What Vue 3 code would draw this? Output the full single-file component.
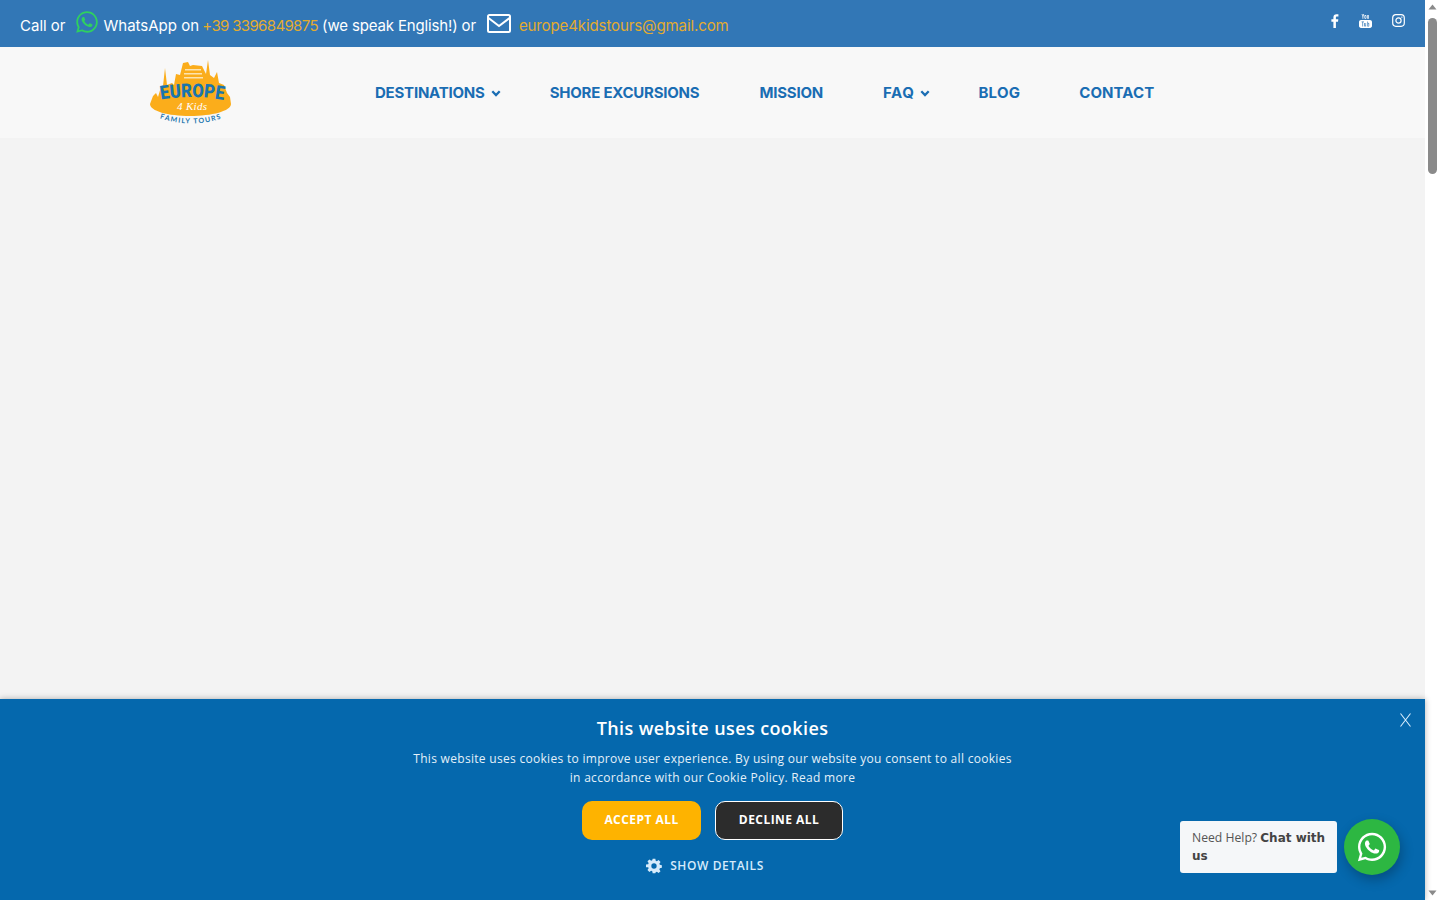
<script setup>
const navItems = [
  { label: "DESTINATIONS", caret: true },
  { label: "SHORE EXCURSIONS" },
  { label: "MISSION" },
  { label: "FAQ", caret: true },
  { label: "BLOG" },
  { label: "CONTACT" }
]
</script>

<template>
  <div class="page">
    <div class="main">
      <div class="topbar">
        <div class="contact">
          <span>Call or</span>
          <svg class="wa-icon" viewBox="0 0 24 24"><path fill="#2fd05f" d="M12.04 2C6.58 2 2.13 6.45 2.13 11.91c0 1.75.46 3.45 1.32 4.95L2.05 22l5.25-1.38c1.45.79 3.08 1.21 4.74 1.21 5.46 0 9.91-4.45 9.91-9.91C21.95 6.45 17.5 2 12.04 2zm0 18.15c-1.48 0-2.93-.4-4.2-1.15l-.3-.18-3.12.82.83-3.04-.2-.31a8.23 8.23 0 0 1-1.26-4.38c0-4.54 3.7-8.24 8.24-8.24 4.54 0 8.23 3.7 8.23 8.24 0 4.54-3.69 8.24-8.22 8.24zm4.52-6.16c-.25-.12-1.47-.72-1.69-.81-.23-.08-.39-.12-.56.12-.17.25-.64.81-.78.97-.14.17-.29.19-.54.06-.25-.12-1.05-.39-1.99-1.23-.74-.66-1.23-1.47-1.38-1.72-.14-.25-.02-.38.11-.51.11-.11.25-.29.37-.43.12-.14.17-.25.25-.41.08-.17.04-.31-.02-.43-.06-.12-.56-1.34-.76-1.84-.2-.48-.41-.42-.56-.43h-.48c-.17 0-.43.06-.66.31-.22.25-.86.85-.86 2.07 0 1.22.89 2.4 1.01 2.56.12.17 1.75 2.67 4.23 3.74.59.26 1.05.41 1.41.52.59.19 1.13.16 1.56.1.48-.07 1.47-.6 1.67-1.18.21-.58.21-1.07.14-1.18-.06-.11-.22-.17-.47-.29z"/></svg>
          <span>WhatsApp on <a class="gold phone">+39 3396849875</a> <span class="tight">(we speak English!) or</span></span>
          <svg class="mail-icon" viewBox="0 0 24 19"><rect x="1" y="1" width="22" height="17" rx="1.500" fill="none" stroke="#fff" stroke-width="2"/><path d="M1.500 4 12 12l10.500-8" fill="none" stroke="#fff" stroke-width="2"/></svg>
          <a class="gold mail">europe4kidstours@gmail.com</a>
        </div>
        <div class="social">
          <svg width="8" height="14" viewBox="0 0 8 14"><path fill="#fff" d="M2.400 14V7.700H.4V5.300h2V3.500C2.400 1.300 3.600.2 5.500.2c.9 0 1.700.1 1.900.1v2.200H6.100c-1 0-1.200.5-1.200 1.200v1.600h2.400L7 7.700H4.900V14z"/></svg>
          <svg width="13" height="14" viewBox="0 0 13 14"><g fill="#fff"><path d="M2.600 0h.8l.5 2 .5-2h.8l-.9 2.800v1.900h-.8V2.800zM6.400 1c.7 0 1 .4 1 1.100v1.600c0 .7-.4 1.100-1 1.100s-1-.4-1-1.100V2.100c0-.7.3-1.100 1-1.100zm0 .7c-.2 0-.3.1-.3.4v1.600c0 .3.1.4.3.4s.3-.1.3-.4V2.100c0-.3-.1-.4-.3-.4zM8 1.100h.7v2.800c0 .2.1.2.2.2s.2-.1.3-.2V1.100h.7v3.600h-.7v-.4c-.2.3-.4.5-.7.5-.4 0-.5-.3-.5-.7z"/><path fill-rule="evenodd" d="M2 6h9c1.100 0 2 .8 2 1.900v4.200c0 1.100-.9 1.900-2 1.900H2c-1.100 0-2-.8-2-1.900V7.900C0 6.800.9 6 2 6zm.6 1.500v.7h.8v4.300h.7V8.200h.8v-.7zm2.700 1.400v3c0 .4.200.6.500.6s.5-.2.700-.4v.4h.6V8.900h-.6v2.700c-.1.100-.2.200-.3.200s-.2-.1-.2-.2V8.900zm3-1.400v5h.6v-.3c.2.200.4.400.7.400.4 0 .6-.3.6-.8V9.700c0-.6-.2-.9-.6-.9-.3 0-.5.200-.7.400V7.500zm.9 1.900c.1 0 .3.100.3.400v1.900c0 .3-.1.400-.3.400s-.2 0-.3-.1V9.500c.1-.1.200-.1.300-.1z"/></g></svg>
          <svg width="13" height="13" viewBox="0 0 13 13" fill="none" stroke="#fff" stroke-width="1.200"><rect x=".7" y=".7" width="11.600" height="11.600" rx="3.200"/><circle cx="6.500" cy="6.500" r="2.600"/><circle cx="9.900" cy="3.100" r=".4" fill="#fff" stroke-width=".6"/></svg>
        </div>
      </div>

      <nav class="nav">
        <svg class="logo" viewBox="0 0 82 66">
          <path fill="#fbad1b" d="M0 44 3 36 6 33 8 37 11 27 13 26 15 8 17 25 22 23 24 25 26 14 30 15 33 3 38 2 40 6 43 5 52 6 54 10 56 14 58 0 60 15 64 18 67 12 69 23 74 25 77 33 80 37 81 44C81 51 62 56 40 56 18 56 0 51 0 44Z"/>
          <path fill="#fde3ad" d="M35 9h16v1.500H35zM34 13h18v1.500H34zM34 17h19v1.500H34z"/>
          <path id="logo-top" fill="none" d="M9 40Q41 34 74 40"/>
          <text class="logo-europe" textLength="63" lengthAdjust="spacingAndGlyphs"><textPath href="#logo-top" startOffset="2">EUROPE</textPath></text>
          <text class="logo-kids" x="42" y="50" text-anchor="middle" textLength="30">4 Kids</text>
          <path id="logo-curve" fill="none" d="M9 58Q41 69 73 58"/>
          <text class="logo-tours"><textPath href="#logo-curve" startOffset="50%" text-anchor="middle">FAMILY TOURS</textPath></text>
        </svg>
        <ul class="menu">
          <li v-for="item in navItems" :key="item.label" :class="{ 'has-caret': item.caret }">
            {{ item.label }}
            <svg v-if="item.caret" class="caret" viewBox="0 0 10 7"><path d="M1.300 1.300 5 5l3.700-3.700" fill="none" stroke="#1a6db3" stroke-width="2.300"/></svg>
          </li>
        </ul>
      </nav>

      <div class="content"></div>

      <section class="cookie">
        <svg class="close" viewBox="0 0 11 14"><path d="M.5.5l10 13M10.500.5l-10 13" stroke="#d8edfd" stroke-width="1.100" fill="none"/></svg>
        <h2>This website uses cookies</h2>
        <p>This website uses cookies to improve user experience. By using our website you consent to all cookies<br>in accordance with our Cookie Policy. Read more</p>
        <div class="buttons">
          <button class="accept">ACCEPT ALL</button>
          <button class="decline">DECLINE ALL</button>
        </div>
        <div class="details">
          <svg width="16" height="16" viewBox="0 0 24 24"><path fill="#d6ebfb" fill-rule="evenodd" d="M10 1h4l.6 3.100 1.700.7 2.600-1.800 2.900 2.900-1.800 2.600.7 1.700 3.100.6v4l-3.100.6-.7 1.700 1.800 2.600-2.900 2.900-2.600-1.800-1.700.7L14 23h-4l-.6-3.100-1.700-.7-2.600 1.800-2.900-2.900 1.800-2.600-.7-1.700L0 13.900v-4l3.300-.6.700-1.700L2.200 5l2.900-2.900L7.700 4l1.700-.7zM12 8a4 4 0 1 0 0 8 4 4 0 0 0 0-8z"/></svg>
          <span>SHOW DETAILS</span>
        </div>
      </section>

      <div class="chat">
        <div class="bubble">Need Help? <b>Chat with us</b></div>
        <div class="wa-button">
          <svg width="34" height="34" viewBox="0 0 24 24"><path fill="#fff" d="M12.04 2C6.58 2 2.13 6.45 2.13 11.91c0 1.750.46 3.450 1.320 4.950L2.050 22l5.250-1.380c1.450.79 3.080 1.210 4.740 1.210 5.460 0 9.910-4.450 9.910-9.910C21.950 6.450 17.500 2 12.040 2zm0 18.150c-1.480 0-2.930-.4-4.200-1.150l-.3-.18-3.120.82.83-3.040-.2-.31a8.230 8.230 0 0 1-1.260-4.380c0-4.540 3.700-8.240 8.240-8.240 4.540 0 8.230 3.700 8.230 8.240 0 4.540-3.690 8.240-8.220 8.240zm4.520-6.160c-.25-.12-1.470-.72-1.690-.81-.23-.08-.39-.12-.56.12-.17.25-.64.81-.78.97-.14.17-.29.19-.54.06-.25-.12-1.050-.39-1.990-1.230-.74-.66-1.230-1.470-1.380-1.720-.14-.25-.02-.38.11-.51.11-.11.25-.29.37-.43.12-.14.17-.25.25-.41.08-.17.04-.31-.02-.43-.06-.12-.56-1.340-.76-1.840-.2-.48-.41-.42-.56-.43h-.48c-.17 0-.43.06-.66.31-.22.25-.86.85-.86 2.070 0 1.220.89 2.400 1.010 2.560.12.17 1.750 2.670 4.230 3.740.59.26 1.050.41 1.410.52.59.19 1.130.16 1.560.1.48-.07 1.470-.6 1.670-1.180.21-.58.21-1.070.14-1.180-.06-.11-.22-.17-.47-.29z"/></svg>
        </div>
      </div>
    </div>

    <div class="scrollbar">
      <svg class="arrow" viewBox="0 0 15 15"><path d="M3.500 9.500h8l-4-5z" fill="#8a8a8a"/></svg>
      <div class="track"><div class="thumb"></div></div>
      <svg class="arrow" viewBox="0 0 15 15"><path d="M3.500 5.500h8l-4 5z" fill="#8a8a8a"/></svg>
    </div>
  </div>
</template>

<style>
html, body {
  margin: 0;
  overflow: hidden;
}
</style>

<style scoped>
.page {
  display: flex;
  width: 1440px;
  height: 900px;
  overflow: hidden;
  font-family: "Inter", "Liberation Sans", sans-serif;
}

.main {
  position: relative;
  flex: 1;
  display: flex;
  flex-direction: column;
  background: #f3f3f3;
}

.topbar {
  height: 47px;
  box-sizing: border-box;
  display: flex;
  justify-content: space-between;
  padding: 0 20px;
  background: #3277b6;
  color: #fff;
}

.contact {
  display: flex;
  align-items: center;
  height: 51px;
  font-size: 15px;
}

.gold {
  color: #e3ab2f;
}

.phone {
  margin-left: -1px;
  letter-spacing: -0.65px;
}

.tight {
  letter-spacing: -0.15px;
}

.mail {
  letter-spacing: -0.1px;
}

.wa-icon {
  width: 26px;
  height: 26px;
  margin: -8px 4px 0 8px;
}

.mail-icon {
  width: 24px;
  height: 19px;
  margin: -4px 8px 0 11px;
}

.social {
  display: flex;
  align-items: center;
  gap: 20px;
  height: 41px;
}

.nav {
  height: 91px;
  display: flex;
  align-items: center;
  padding-left: 150px;
  background: #f8f8f8;
}

.logo {
  width: 82px;
  height: 66px;
  margin-top: 1px;
}

.logo-europe {
  font: 900 19px "Roboto", sans-serif;
  fill: #1b75ae;
}

.logo-kids {
  font: italic 400 11px "Liberation Serif", serif;
  fill: #fff;
}

.logo-tours {
  font: 700 7px "Lato", sans-serif;
  letter-spacing: 1.200px;
  fill: #1b75ae;
}

.menu {
  display: flex;
  gap: 60px;
  list-style: none;
  margin: 0 0 0 143px;
  padding: 0;
  font-size: 15px;
  font-weight: 700;
  letter-spacing: -0.22px;
  color: #1a6db3;
}

.menu li {
  display: flex;
  align-items: center;
}

.has-caret {
  margin-right: -11px;
}

.menu li:nth-child(4) {
  margin-right: -12px;
  letter-spacing: 0.6px;
}

.menu li:nth-child(5) {
  margin-right: -1px;
  letter-spacing: 0.25px;
}

.menu li:nth-child(6) {
  letter-spacing: 0.1px;
}

.caret {
  width: 10px;
  height: 7px;
  margin: 2px 0 0 6px;
}

.content {
  flex: 1;
}

.cookie {
  position: absolute;
  left: 0;
  right: 0;
  bottom: 0;
  height: 201px;
  box-sizing: border-box;
  padding-top: 17px;
  text-align: center;
  background: #0568ad;
  color: #fff;
  font-family: "Open Sans", sans-serif;
  box-shadow: 0 0 6px rgba(0, 0, 0, 0.3);
}

.close {
  position: absolute;
  top: 14px;
  right: 14px;
  width: 11px;
  height: 14px;
}

.cookie h2 {
  margin: 0 0 9px;
  font-size: 18px;
  line-height: 24px;
  font-weight: 600;
  letter-spacing: 0.4px;
}

.cookie p {
  margin: 0;
  font-size: 12px;
  line-height: 19px;
  letter-spacing: 0.3px;
  color: #e4f0f9;
}

.buttons {
  display: flex;
  justify-content: center;
  gap: 14px;
  margin-top: 14px;
}

.buttons button {
  height: 39px;
  padding: 0 0 2px;
  border-radius: 10px;
  border: 0;
  font-family: inherit;
  font-size: 12px;
  font-weight: 700;
  letter-spacing: 0.45px;
  color: #fff;
}

.accept {
  width: 119px;
  background: #feb300;
}

.decline {
  width: 128px;
  background: #2c2c2c;
  border: 1px solid #fff !important;
}

.details {
  display: flex;
  justify-content: center;
  align-items: center;
  gap: 8px;
  margin-top: 17px;
  padding-right: 15px;
  font-size: 12px;
  font-weight: 600;
  letter-spacing: 0.6px;
  color: #d6ebfb;
}

.chat {
  position: absolute;
  right: 25px;
  bottom: 25px;
  display: flex;
  align-items: center;
  gap: 7px;
}

.bubble {
  width: 157px;
  height: 52px;
  box-sizing: border-box;
  padding: 8px 6px 8px 12px;
  border-radius: 3px;
  background: #f5f7f9;
  color: #555;
  font: 12.200px/18px "Open Sans", sans-serif;
}

.bubble b {
  font: 700 12px/1 "DejaVu Sans", sans-serif;
  color: #444;
}

.wa-button {
  width: 56px;
  height: 56px;
  display: flex;
  align-items: center;
  justify-content: center;
  border-radius: 50%;
  background: #2db742;
  box-shadow: 2px 5px 12px rgba(0, 0, 0, 0.25);
}

.scrollbar {
  width: 15px;
  display: flex;
  flex-direction: column;
  background: #fff;
}

.arrow {
  width: 15px;
  height: 15px;
  flex: none;
}

.track {
  flex: 1;
}

.thumb {
  width: 9px;
  height: 156px;
  margin: 3px 0 0 3px;
  border-radius: 5px;
  background: #8a8a8a;
}
</style>
